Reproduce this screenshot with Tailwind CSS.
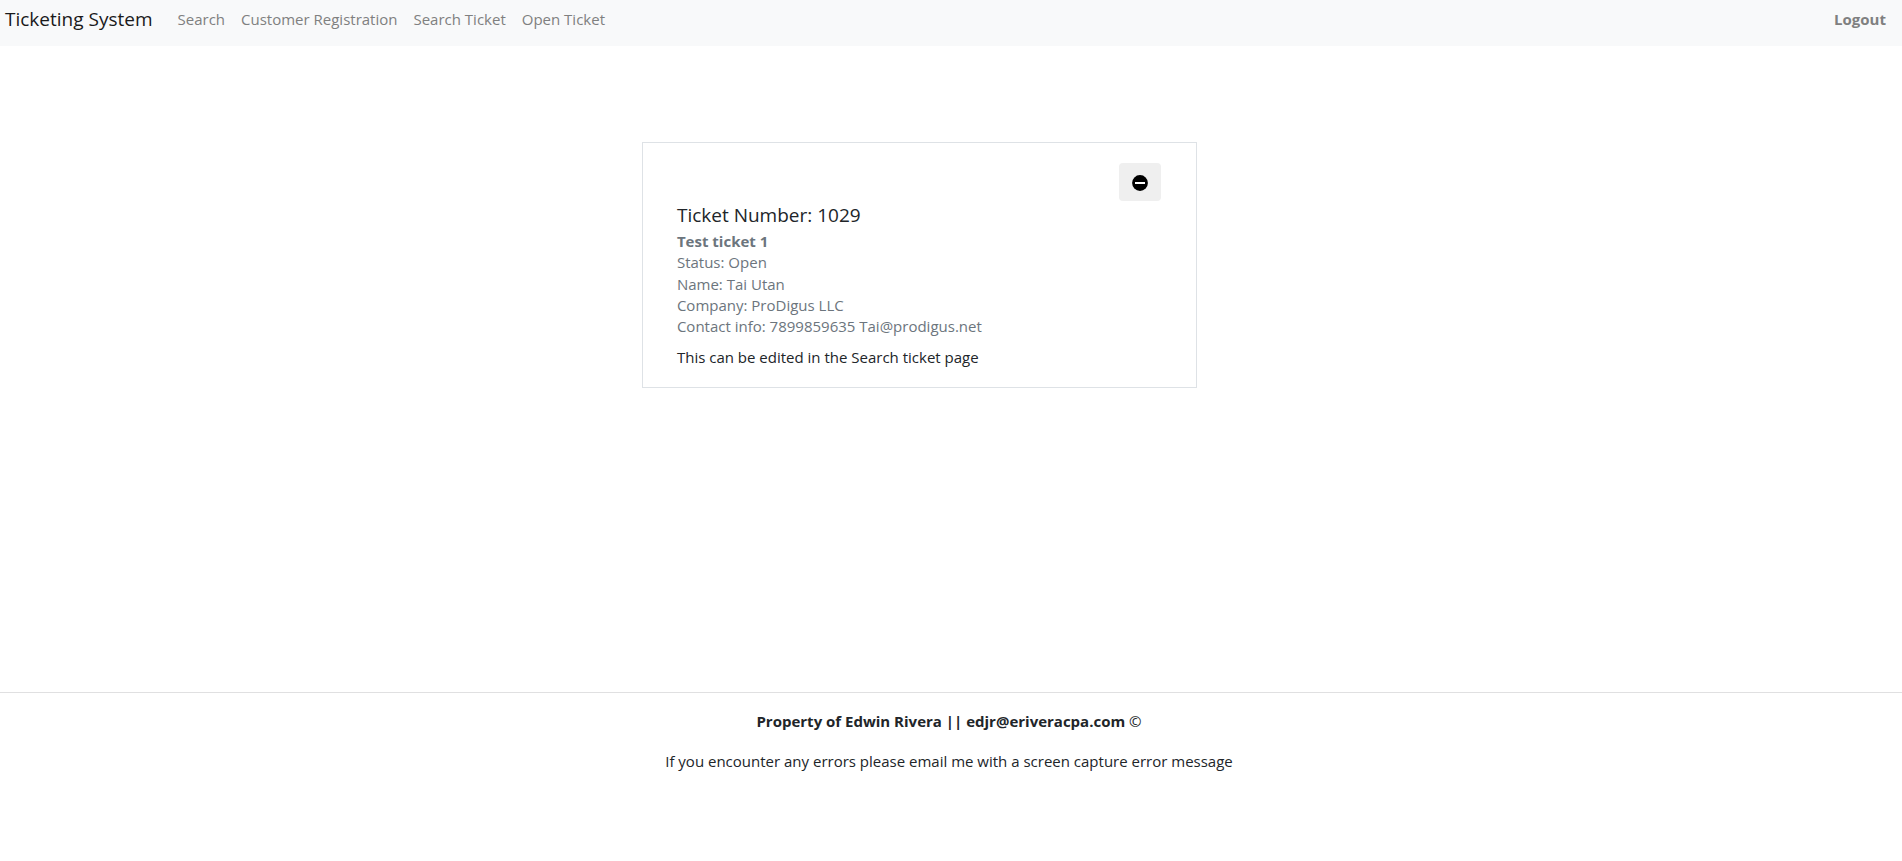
<!DOCTYPE html>
<html lang="en">
<head>
<meta charset="utf-8">
<meta name="viewport" content="width=device-width, initial-scale=1">
<title>Ticketing System</title>
<script src="https://cdn.jsdelivr.net/npm/@tailwindcss/browser@4"></script>
</head>
<body class="bg-white font-['Open_Sans',sans-serif] text-[15px] leading-6 text-[#212529]">
<header class="bg-[#f8f9fa]">
  <nav class="flex h-[46px] items-start pt-[7px] pr-4 pl-[5px] text-[#7f8080]">
    <a href="#" class="mr-[25px] text-[19px] text-[#1a1a1b]">Ticketing System</a>
    <div class="flex gap-4">
      <a href="#">Search</a>
      <a href="#">Customer Registration</a>
      <a href="#">Search Ticket</a>
      <a href="#">Open Ticket</a>
    </div>
    <a href="#" class="ml-auto font-bold">Logout</a>
  </nav>
</header>
<main class="min-h-[646px] pt-24">
  <article class="ml-[33.75%] w-[555px] border border-[#dee2e6] pt-5 pr-[35px] pb-[18px] pl-[34px]">
    <div class="flex justify-end">
      <button type="button" aria-label="Close ticket" class="flex h-[38px] w-[42px] items-center justify-center rounded bg-[#efefef] pt-0.5">
        <svg class="size-4" viewBox="0 0 16 16" aria-hidden="true"><circle cx="8" cy="8" r="7.9"/><path d="M3 7h10v2H3z" fill="#fff"/></svg>
      </button>
    </div>
    <h1 class="mt-0.5 mb-1 text-[19px]">Ticket Number: 1029</h1>
    <div class="leading-[21px] text-[#6c757d]">
      <h2 class="font-bold">Test ticket 1</h2>
      <p class="mb-px">Status: Open</p>
      <p>Name: Tai Utan</p>
      <p>Company: ProDigus LLC</p>
      <p>Contact info: 7899859635 Tai@prodigus.net</p>
    </div>
    <p class="mt-2">This can be edited in the Search ticket page</p>
  </article>
</main>
<footer class="border-t border-[#e0e0e1] pt-4 pr-1 text-center">
  <p class="mb-4"><strong>Property of Edwin Rivera || edjr@eriveracpa.com</strong> ©</p>
  <p>If you encounter any errors please email me with a screen capture error message</p>
</footer>
</body>
</html>
